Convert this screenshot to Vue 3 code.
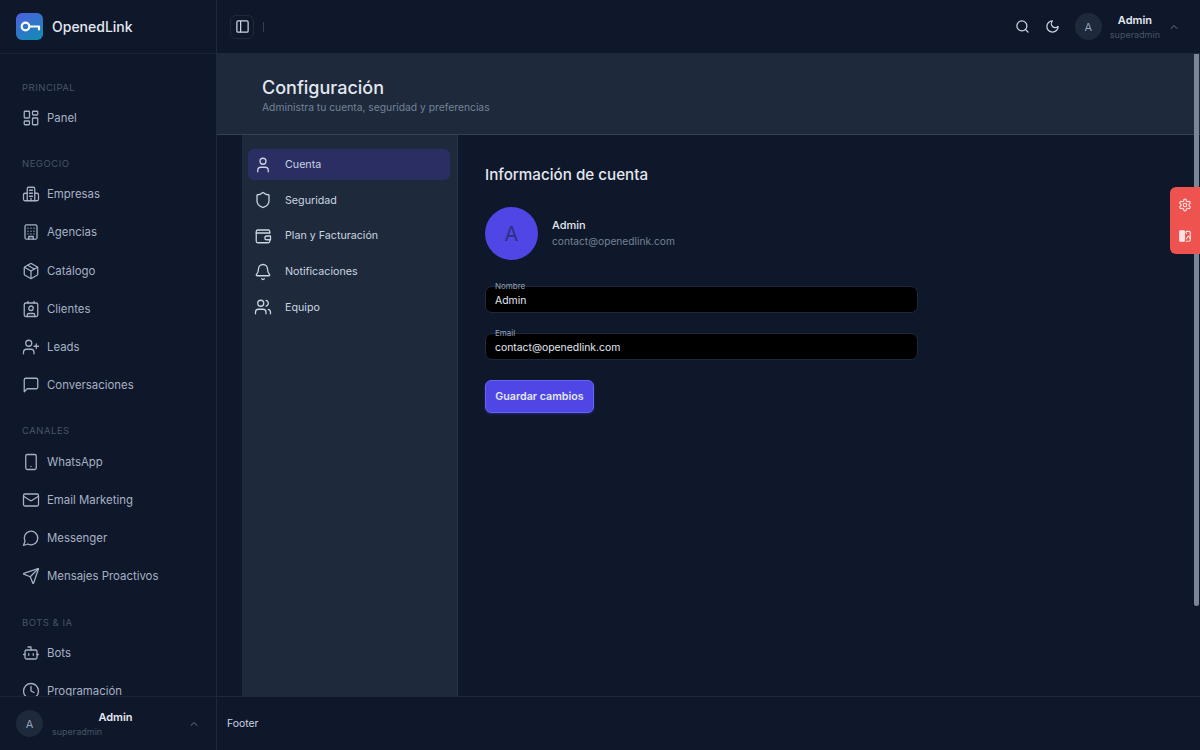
<script setup>
import { ref } from 'vue'

const user = { name: 'Admin', role: 'superadmin', email: 'contact@openedlink.com' }

// lucide style paths, all on a 24x24 box
const icons = {
  panel: '<rect x="3" y="3" width="7" height="9" rx="1"/><rect x="14" y="3" width="7" height="5" rx="1"/><rect x="14" y="12" width="7" height="9" rx="1"/><rect x="3" y="16" width="7" height="5" rx="1"/>',
  empresas: '<path d="M7 21V5a2 2 0 0 1 2-2h6a2 2 0 0 1 2 2v16"/><path d="M7 11H4a2 2 0 0 0-2 2v6a2 2 0 0 0 2 2h16a2 2 0 0 0 2-2v-6a2 2 0 0 0-2-2h-3"/><path d="M10 7h4M10 11h4M10 15h4"/><path d="M12 18v3"/>',
  agencias: '<rect x="4" y="2.5" width="16" height="19" rx="2"/><path d="M9 21.5V18h6v3.5"/><path d="M8 7h.01M12 7h.01M16 7h.01M8 11h.01M12 11h.01M16 11h.01M8 14.5h.01M12 14.5h.01M16 14.5h.01"/>',
  catalogo: '<path d="M21 8a2 2 0 0 0-1-1.73l-7-4a2 2 0 0 0-2 0l-7 4A2 2 0 0 0 3 8v8a2 2 0 0 0 1 1.73l7 4a2 2 0 0 0 2 0l7-4A2 2 0 0 0 21 16Z"/><path d="m7.5 4.27 9 5.15"/><path d="m3.3 7 8.7 5 8.7-5"/><path d="M12 22V12"/>',
  clientes: '<path d="M16 2v2M8 2v2"/><rect x="3" y="4" width="18" height="18" rx="2"/><circle cx="12" cy="11" r="3"/><path d="M7 22v-2a2 2 0 0 1 2-2h6a2 2 0 0 1 2 2v2"/>',
  leads: '<path d="M16 21v-2a4 4 0 0 0-4-4H6a4 4 0 0 0-4 4v2"/><circle cx="9" cy="7" r="4"/><path d="M19 8v6M22 11h-6"/>',
  chat: '<path d="M21 15a2 2 0 0 1-2 2H7l-4 4V5a2 2 0 0 1 2-2h14a2 2 0 0 1 2 2z"/>',
  phone: '<rect x="5" y="2" width="14" height="20" rx="2"/><path d="M12 18h.01"/>',
  mail: '<rect x="2" y="4" width="20" height="16" rx="2"/><path d="m22 7-8.97 5.7a1.94 1.94 0 0 1-2.06 0L2 7"/>',
  messenger: '<path d="M7.9 20A9 9 0 1 0 4 16.1L2 22Z"/>',
  send: '<path d="M14.5 21.7a.5.5 0 0 0 .9 0l6.5-19a.5.5 0 0 0-.6-.6l-19 6.5a.5.5 0 0 0 0 .9l7.9 3.2a2 2 0 0 1 1.1 1.1z"/><path d="m21.9 2.1-10.9 10.9"/>',
  bot: '<path d="M12 8V4H8"/><rect x="4" y="8" width="16" height="12" rx="2"/><path d="M2 14h2M20 14h2M15 13v2M9 13v2"/>',
  clock: '<circle cx="12" cy="12" r="10"/><path d="M12 6v6l4 2"/>',
  user: '<path d="M19 21v-2a4 4 0 0 0-4-4H9a4 4 0 0 0-4 4v2"/><circle cx="12" cy="7" r="4"/>',
  shield: '<path d="M20 13c0 5-3.5 7.5-7.66 8.95a1 1 0 0 1-.67-.01C7.5 20.5 4 18 4 13V6a1 1 0 0 1 1-1c2 0 4.5-1.2 6.24-2.72a1.17 1.17 0 0 1 1.52 0C14.51 3.81 17 5 19 5a1 1 0 0 1 1 1z"/>',
  wallet: '<path d="M21 8V6a2 2 0 0 0-2-2H5a2 2 0 0 0-2 2v13a2 2 0 0 0 2 2h14a2 2 0 0 0 2-2v-2"/><path d="M3 8h18"/><path d="M22 12v5h-5a2.5 2.5 0 0 1 0-5z"/>',
  bell: '<path d="M10.27 21a2 2 0 0 0 3.46 0"/><path d="M3.26 15.33A1 1 0 0 0 4 17h16a1 1 0 0 0 .74-1.67C19.41 13.96 18 12.5 18 8A6 6 0 0 0 6 8c0 4.5-1.41 5.96-2.74 7.33"/>',
  team: '<path d="M16 21v-2a4 4 0 0 0-4-4H6a4 4 0 0 0-4 4v2"/><circle cx="9" cy="7" r="4"/><path d="M22 21v-2a4 4 0 0 0-3-3.87"/><path d="M16 3.13a4 4 0 0 1 0 7.75"/>'
}

const sections = [
  { title: 'PRINCIPAL', items: [{ label: 'Panel', icon: 'panel' }] },
  {
    title: 'NEGOCIO',
    items: [
      { label: 'Empresas', icon: 'empresas' },
      { label: 'Agencias', icon: 'agencias' },
      { label: 'Catálogo', icon: 'catalogo' },
      { label: 'Clientes', icon: 'clientes' },
      { label: 'Leads', icon: 'leads' },
      { label: 'Conversaciones', icon: 'chat' }
    ]
  },
  {
    title: 'CANALES',
    items: [
      { label: 'WhatsApp', icon: 'phone' },
      { label: 'Email Marketing', icon: 'mail' },
      { label: 'Messenger', icon: 'messenger' },
      { label: 'Mensajes Proactivos', icon: 'send' }
    ]
  },
  {
    title: 'BOTS & IA',
    items: [
      { label: 'Bots', icon: 'bot' },
      { label: 'Programación', icon: 'clock' }
    ]
  }
]

const tabs = [
  { label: 'Cuenta', icon: 'user' },
  { label: 'Seguridad', icon: 'shield' },
  { label: 'Plan y Facturación', icon: 'wallet' },
  { label: 'Notificaciones', icon: 'bell' },
  { label: 'Equipo', icon: 'team' }
]

const activeTab = ref('Cuenta')
const nombre = ref(user.name)
const email = ref(user.email)
</script>

<template>
  <div class="app">
    <aside class="sidebar">
      <div class="brand">
        <span class="logo">
          <svg viewBox="0 0 27 27" width="27" height="27" fill="none" stroke="#fff" stroke-width="2.2" stroke-linecap="round" stroke-linejoin="round">
            <circle cx="9.5" cy="13.5" r="3.8" />
            <path d="M13.5 13.5h9.500v3" />
          </svg>
        </span>
        <span class="brand-name">OpenedLink</span>
      </div>

      <nav class="nav">
        <div v-for="section in sections" :key="section.title" class="nav-section">
          <div class="nav-title">{{ section.title }}</div>
          <a v-for="item in section.items" :key="item.label" class="nav-item">
            <svg class="icon" viewBox="0 0 24 24" v-html="icons[item.icon]"></svg>
            <span>{{ item.label }}</span>
          </a>
        </div>
      </nav>

      <div class="side-user">
        <span class="avatar">A</span>
        <div class="side-user-text">
          <div class="user-name">{{ user.name }}</div>
          <div class="user-role">{{ user.role }}</div>
        </div>
        <svg class="chevron" viewBox="0 0 24 24"><path d="m18 15-6-6-6 6" /></svg>
      </div>
    </aside>

    <div class="main">
      <header class="topbar">
        <button class="toggle">
          <svg viewBox="0 0 24 24"><rect x="3" y="3" width="18" height="18" rx="2" /><path d="M9 3v18" /></svg>
        </button>
        <span class="divider"></span>
        <div class="top-actions">
          <svg class="top-icon" viewBox="0 0 24 24"><circle cx="11" cy="11" r="8" /><path d="m21 21-4.3-4.3" /></svg>
          <svg class="top-icon" viewBox="0 0 24 24"><path d="M12 3a6 6 0 0 0 9 9 9 9 0 1 1-9-9Z" /></svg>
          <div class="top-user">
            <span class="avatar">A</span>
            <div class="top-user-text">
              <div class="user-name">{{ user.name }}</div>
              <div class="user-role">{{ user.role }}</div>
            </div>
            <svg class="chevron" viewBox="0 0 24 24"><path d="m18 15-6-6-6 6" /></svg>
          </div>
        </div>
      </header>

      <div class="scroller">
        <section class="page-head">
          <h1>Configuración</h1>
          <p>Administra tu cuenta, seguridad y preferencias</p>
        </section>

        <div class="settings">
          <div class="tabs">
            <a
              v-for="tab in tabs"
              :key="tab.label"
              class="tab"
              :class="{ active: activeTab === tab.label }"
              @click="activeTab = tab.label"
            >
              <svg class="icon" viewBox="0 0 24 24" v-html="icons[tab.icon]"></svg>
              <span>{{ tab.label }}</span>
            </a>
          </div>

          <div class="content">
            <h2>Información de cuenta</h2>
            <div class="profile">
              <span class="big-avatar">A</span>
              <div class="profile-text">
                <div class="profile-name">{{ user.name }}</div>
                <div class="profile-mail">{{ user.email }}</div>
              </div>
            </div>

            <label class="field">
              <span class="field-label">Nombre</span>
              <input v-model="nombre" type="text" />
            </label>
            <label class="field">
              <span class="field-label">Email</span>
              <input v-model="email" type="text" />
            </label>

            <button class="save">Guardar cambios</button>
          </div>
        </div>

        <div class="scroll-thumb"></div>
      </div>

      <footer class="footer">Footer</footer>

      <div class="float-tab">
        <svg viewBox="0 0 24 24"><path d="M12.22 2h-.44a2 2 0 0 0-2 2v.18a2 2 0 0 1-1 1.73l-.43.25a2 2 0 0 1-2 0l-.15-.08a2 2 0 0 0-2.73.73l-.22.38a2 2 0 0 0 .73 2.73l.15.1a2 2 0 0 1 1 1.72v.51a2 2 0 0 1-1 1.74l-.15.09a2 2 0 0 0-.73 2.73l.22.38a2 2 0 0 0 2.73.73l.15-.08a2 2 0 0 1 2 0l.43.25a2 2 0 0 1 1 1.73V20a2 2 0 0 0 2 2h.44a2 2 0 0 0 2-2v-.18a2 2 0 0 1 1-1.73l.43-.25a2 2 0 0 1 2 0l.15.08a2 2 0 0 0 2.73-.73l.22-.39a2 2 0 0 0-.73-2.73l-.15-.08a2 2 0 0 1-1-1.74v-.5a2 2 0 0 1 1-1.74l.15-.09a2 2 0 0 0 .73-2.73l-.22-.38a2 2 0 0 0-2.73-.73l-.15.08a2 2 0 0 1-2 0l-.43-.25a2 2 0 0 1-1-1.73V4a2 2 0 0 0-2-2z" /><circle cx="12" cy="12" r="3" /></svg>
        <svg viewBox="0 0 24 24"><rect x="3" y="3" width="8" height="18" rx="1.5" fill="#fde2e2" /><path d="M14 8V4h5a2 2 0 0 1 2 2v13a2 2 0 0 1-2 2h-5" /><path d="m14 17 4-5 3 4" /></svg>
      </div>
    </div>
  </div>
</template>

<style>
html,
body {
  margin: 0;
  background: #0f172a;
}
</style>

<style scoped>
.app {
  display: flex;
  width: 1200px;
  height: 750px;
  overflow: hidden;
  background: #0f172a;
  color: #cbd5e1;
  font-family: Inter, "Liberation Sans", sans-serif;
  font-size: 11.4px;
}

.icon {
  width: 18px;
  height: 18px;
  flex: none;
  fill: none;
  stroke: currentColor;
  stroke-width: 1.7;
  stroke-linecap: round;
  stroke-linejoin: round;
}

/* sidebar */
.sidebar {
  width: 216px;
  flex: none;
  display: flex;
  flex-direction: column;
  border-right: 1px solid #1e293b;
  box-sizing: content-box;
}
.brand {
  height: 53px;
  flex: none;
  display: flex;
  align-items: center;
  gap: 9px;
  padding-left: 16px;
  border-bottom: 1px solid #1a2436;
}
.logo {
  width: 27px;
  height: 27px;
  border-radius: 6px;
  background: linear-gradient(150deg, #4f5fe0, #0e8fb0);
}
.brand-name {
  font-size: 14px;
  font-weight: 500;
  color: #e2e8f0;
}
.nav {
  flex: 1;
  overflow: hidden;
  padding: 26.6px 0 0 22px;
}
.nav-section {
  margin-bottom: 19.9px;
}
.nav-title {
  height: 14px;
  line-height: 14px;
  font-size: 9.5px;
  letter-spacing: 0.5px;
  color: #475569;
  margin-bottom: 4px;
}
.nav-item {
  height: 38.3px;
  display: flex;
  align-items: center;
  gap: 7px;
  color: #a6b2c4;
}
.avatar {
  width: 27px;
  height: 27px;
  flex: none;
  display: flex;
  align-items: center;
  justify-content: center;
  border-radius: 50%;
  background: #1e293b;
  color: #94a3b8;
  font-size: 11px;
}
.side-user {
  height: 53px;
  flex: none;
  display: flex;
  align-items: center;
  padding: 0 16px;
  border-top: 1px solid #1a2436;
  gap: 9px;
}
.side-user-text {
  flex: 1;
}
.side-user-text .user-name {
  text-align: center;
}
.user-name {
  font-size: 11px;
  font-weight: 600;
  color: #e2e8f0;
}
.user-role {
  font-size: 9px;
  color: #475569;
  margin-top: 2px;
}
.chevron {
  width: 12px;
  height: 12px;
  flex: none;
  fill: none;
  stroke: #64748b;
  stroke-width: 2;
  stroke-linecap: round;
  stroke-linejoin: round;
}

/* main column */
.main {
  flex: 1;
  min-width: 0;
  position: relative;
  display: flex;
  flex-direction: column;
}
.topbar {
  height: 53px;
  flex: none;
  display: flex;
  align-items: center;
  padding: 0 20px 0 13px;
  border-bottom: 1px solid #1e293b;
  box-sizing: content-box;
}
.toggle {
  width: 24px;
  height: 24px;
  padding: 0;
  display: flex;
  align-items: center;
  justify-content: center;
  background: transparent;
  border: 1px solid #1e293b;
  border-radius: 6px;
}
.toggle svg {
  width: 15px;
  height: 15px;
  fill: none;
  stroke: #cbd5e1;
  stroke-width: 2;
}
.divider {
  width: 1px;
  height: 10px;
  margin-left: 9px;
  background: #334155;
}
.top-actions {
  margin-left: auto;
  display: flex;
  align-items: center;
  gap: 15px;
}
.top-icon {
  width: 15px;
  height: 15px;
  fill: none;
  stroke: #cbd5e1;
  stroke-width: 2;
  stroke-linecap: round;
  stroke-linejoin: round;
}
.top-user {
  display: flex;
  align-items: center;
  gap: 8px;
}
.top-user-text {
  text-align: center;
}

.scroller {
  position: relative;
  flex: 1;
  min-height: 0;
  overflow: hidden;
}
/* headless chrome hides the real scrollbar, so the thumb is drawn on top */
.scroll-thumb {
  position: absolute;
  top: 0;
  right: 1px;
  width: 5px;
  height: 552px;
  background: #7b8696;
  border-radius: 0 0 3px 3px;
}
.page-head {
  height: 81px;
  box-sizing: border-box;
  padding: 23px 0 0 45px;
  background: #1e293b;
  border-bottom: 1px solid #334155;
}
.page-head h1 {
  margin: 0;
  font-size: 18px;
  line-height: 22px;
  font-weight: 500;
  color: #e2e8f0;
}
.page-head p {
  margin: 2px 0 0;
  font-size: 10.3px;
  color: #748297;
}
.settings {
  display: flex;
  height: 666px;
  padding-left: 25px;
}
.tabs {
  width: 216px;
  flex: none;
  box-sizing: border-box;
  padding: 14px 7px 0 6px;
  background: #1e293b;
  border-right: 1px solid #273449;
}
.tab {
  height: 31px;
  margin-bottom: 4.7px;
  display: flex;
  align-items: center;
  gap: 13px;
  padding-left: 6px;
  border-radius: 6px;
  color: #cbd5e1;
  font-size: 10.7px;
  cursor: pointer;
}
.tab.active {
  background: #2a2e63;
}
.content {
  flex: 1;
  padding: 30px 0 0 27px;
}
.content h2 {
  margin: 0;
  font-size: 15.2px;
  line-height: 20px;
  font-weight: 500;
  color: #e2e8f0;
}
.profile {
  display: flex;
  align-items: center;
  gap: 14px;
  margin-top: 22px;
}
.profile-text {
  margin-bottom: 2px;
}
.big-avatar {
  width: 53px;
  height: 53px;
  display: flex;
  align-items: center;
  justify-content: center;
  border-radius: 50%;
  background: #4f46e5;
  color: #312e81;
  font-size: 20px;
}
.profile-name {
  font-size: 11px;
  font-weight: 500;
  color: #e2e8f0;
}
.profile-mail {
  margin-top: 3px;
  font-size: 10.2px;
  color: #748297;
}
.field {
  position: relative;
  display: block;
  width: 433px;
  margin-top: 26px;
}
.field + .field {
  margin-top: 20px;
}
.field-label {
  position: absolute;
  left: 9px;
  top: -5px;
  font-size: 8px;
  line-height: 10px;
  color: #94a3b8;
  padding: 0 1px;
}
.field input {
  display: block;
  width: 100%;
  height: 27px;
  box-sizing: border-box;
  padding: 2px 9px 0;
  background: #000;
  border: 1px solid #1e293b;
  border-radius: 7px;
  color: #e2e8f0;
  font-family: inherit;
  font-size: 10.4px;
  outline: none;
}
.save {
  display: block;
  width: 109px;
  height: 33px;
  margin-top: 20px;
  padding: 0;
  background: linear-gradient(#5046e5, #4f46e5);
  border: 1px solid #6366f1;
  border-radius: 6px;
  box-shadow: 0 1px 3px rgba(79, 70, 229, 0.4);
  color: #e2e8f0;
  font-family: inherit;
  font-size: 10.7px;
  font-weight: 600;
}
.footer {
  height: 53px;
  flex: none;
  display: flex;
  align-items: center;
  padding-left: 10px;
  border-top: 1px solid #1e293b;
  color: #cbd5e1;
  font-size: 10.4px;
}
.float-tab {
  position: absolute;
  right: 0;
  top: 187px;
  width: 30px;
  height: 67px;
  display: flex;
  flex-direction: column;
  align-items: center;
  justify-content: center;
  gap: 17px;
  background: #ef5350;
  border-radius: 6px 0 0 6px;
}
.float-tab svg {
  width: 14px;
  height: 14px;
  fill: none;
  stroke: #fde2e2;
  stroke-width: 2;
  stroke-linecap: round;
  stroke-linejoin: round;
}
</style>
